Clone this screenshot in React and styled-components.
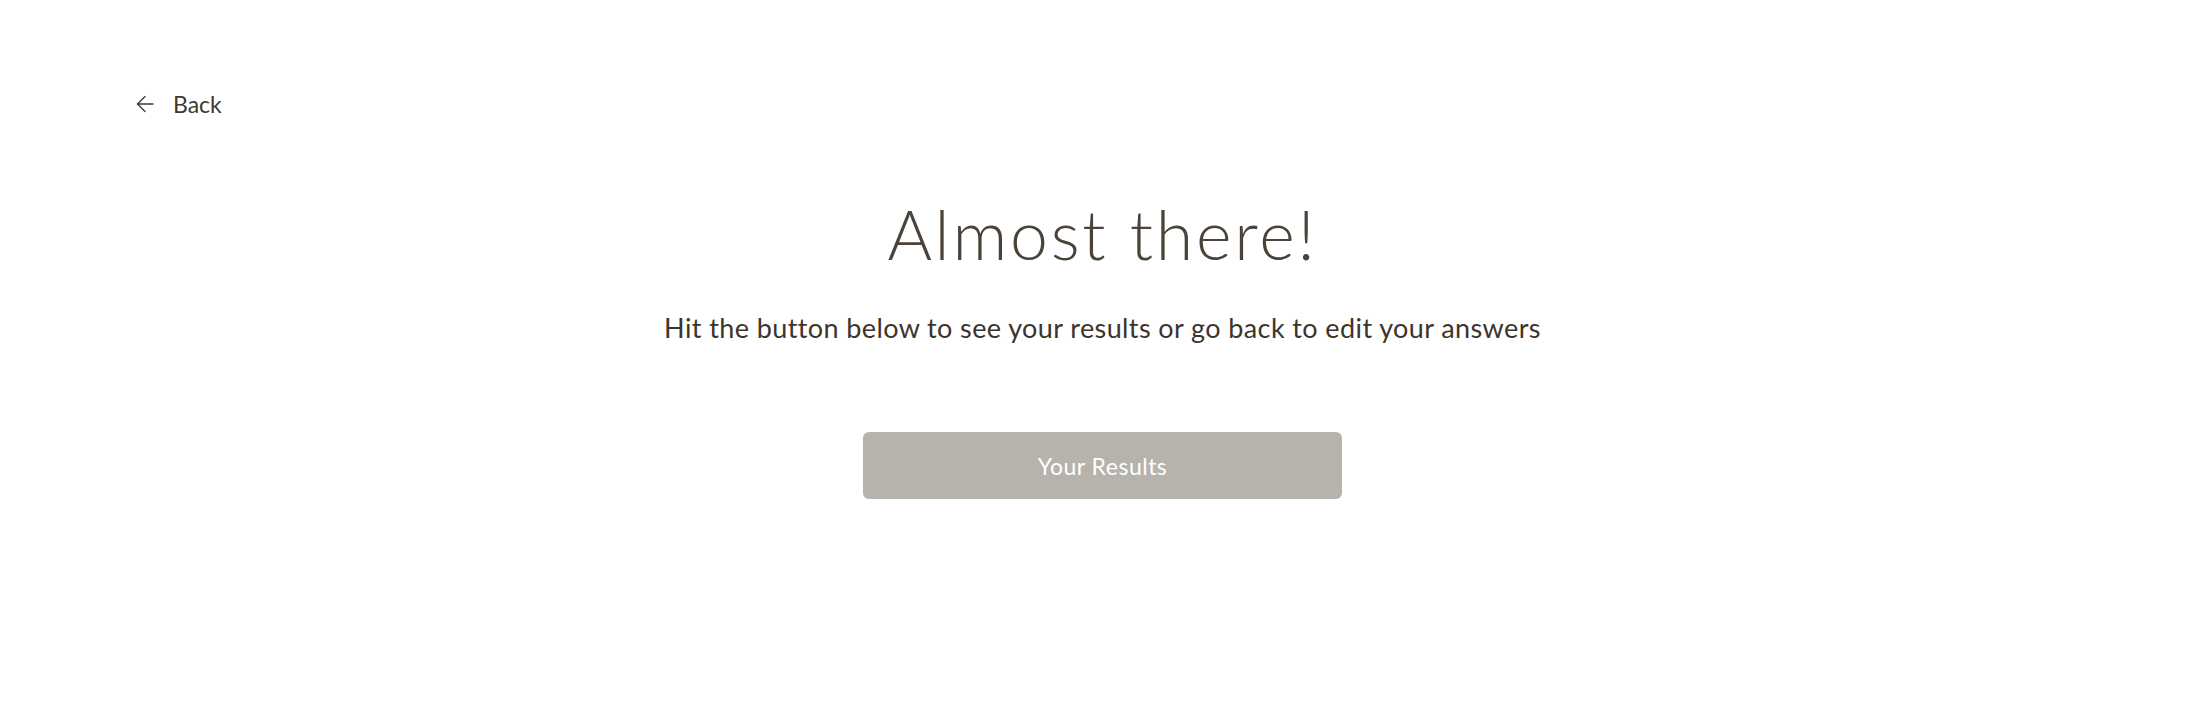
import React from 'react';
import styled, { createGlobalStyle } from 'styled-components';

const GlobalStyle = createGlobalStyle`
  html, body {
    margin: 0;
    padding: 0;
    background: #ffffff;
  }
  body {
    font-family: 'Lato', 'Noto Sans', sans-serif;
    color: #40382f;
  }
`;

const ArrowLeft = () => (
  <svg width="18" height="18" viewBox="0 0 18 18" fill="none" stroke="currentColor" strokeWidth="1.3" strokeLinecap="round" strokeLinejoin="round">
    <path d="M17 9H1.5" />
    <path d="M9 1.5L1.5 9L9 16.5" />
  </svg>
);

const App = () => (
  <>
    <GlobalStyle />
    <Root>
      <TopBar>
        <BackLink href="#">
          <ArrowLeft />
          <span>Back</span>
        </BackLink>
      </TopBar>
      <Content>
        <Title>Almost there!</Title>
        <Subtitle>Hit the button below to see your results or go back to edit your answers</Subtitle>
        <ResultsButton type="button">Your Results</ResultsButton>
      </Content>
    </Root>
  </>
);

const Root = styled.main`
  min-height: 706px;
  padding: 87px 136px 0;
  box-sizing: border-box;
`;

const TopBar = styled.div`
  display: flex;
  align-items: center;
`;

const BackLink = styled.a`
  display: inline-flex;
  align-items: center;
  gap: 19px;
  color: #40382f;
  font-size: 23px;
  text-decoration: none;
  line-height: 34px;
`;

const Content = styled.section`
  display: flex;
  flex-direction: column;
  align-items: center;
  padding-top: 73px;
`;

const Title = styled.h1`
  margin: 0;
  font-family: 'Lato', sans-serif;
  font-weight: 300;
  font-size: 68px;
  letter-spacing: 2.8px;
  line-height: 80px;
  color: #4b4339;
`;

const Subtitle = styled.p`
  margin: 36px 0 0;
  font-size: 27px;
  letter-spacing: 0.4px;
  line-height: 36px;
  color: #3d342b;
`;

const ResultsButton = styled.button`
  margin-top: 86px;
  width: 479px;
  height: 67px;
  border: none;
  border-radius: 6px;
  background: #b6b2ac;
  color: #ffffff;
  font-family: 'Lato', sans-serif;
  font-size: 23px;
  letter-spacing: 0.5px;
  cursor: pointer;
`;

export default App;
